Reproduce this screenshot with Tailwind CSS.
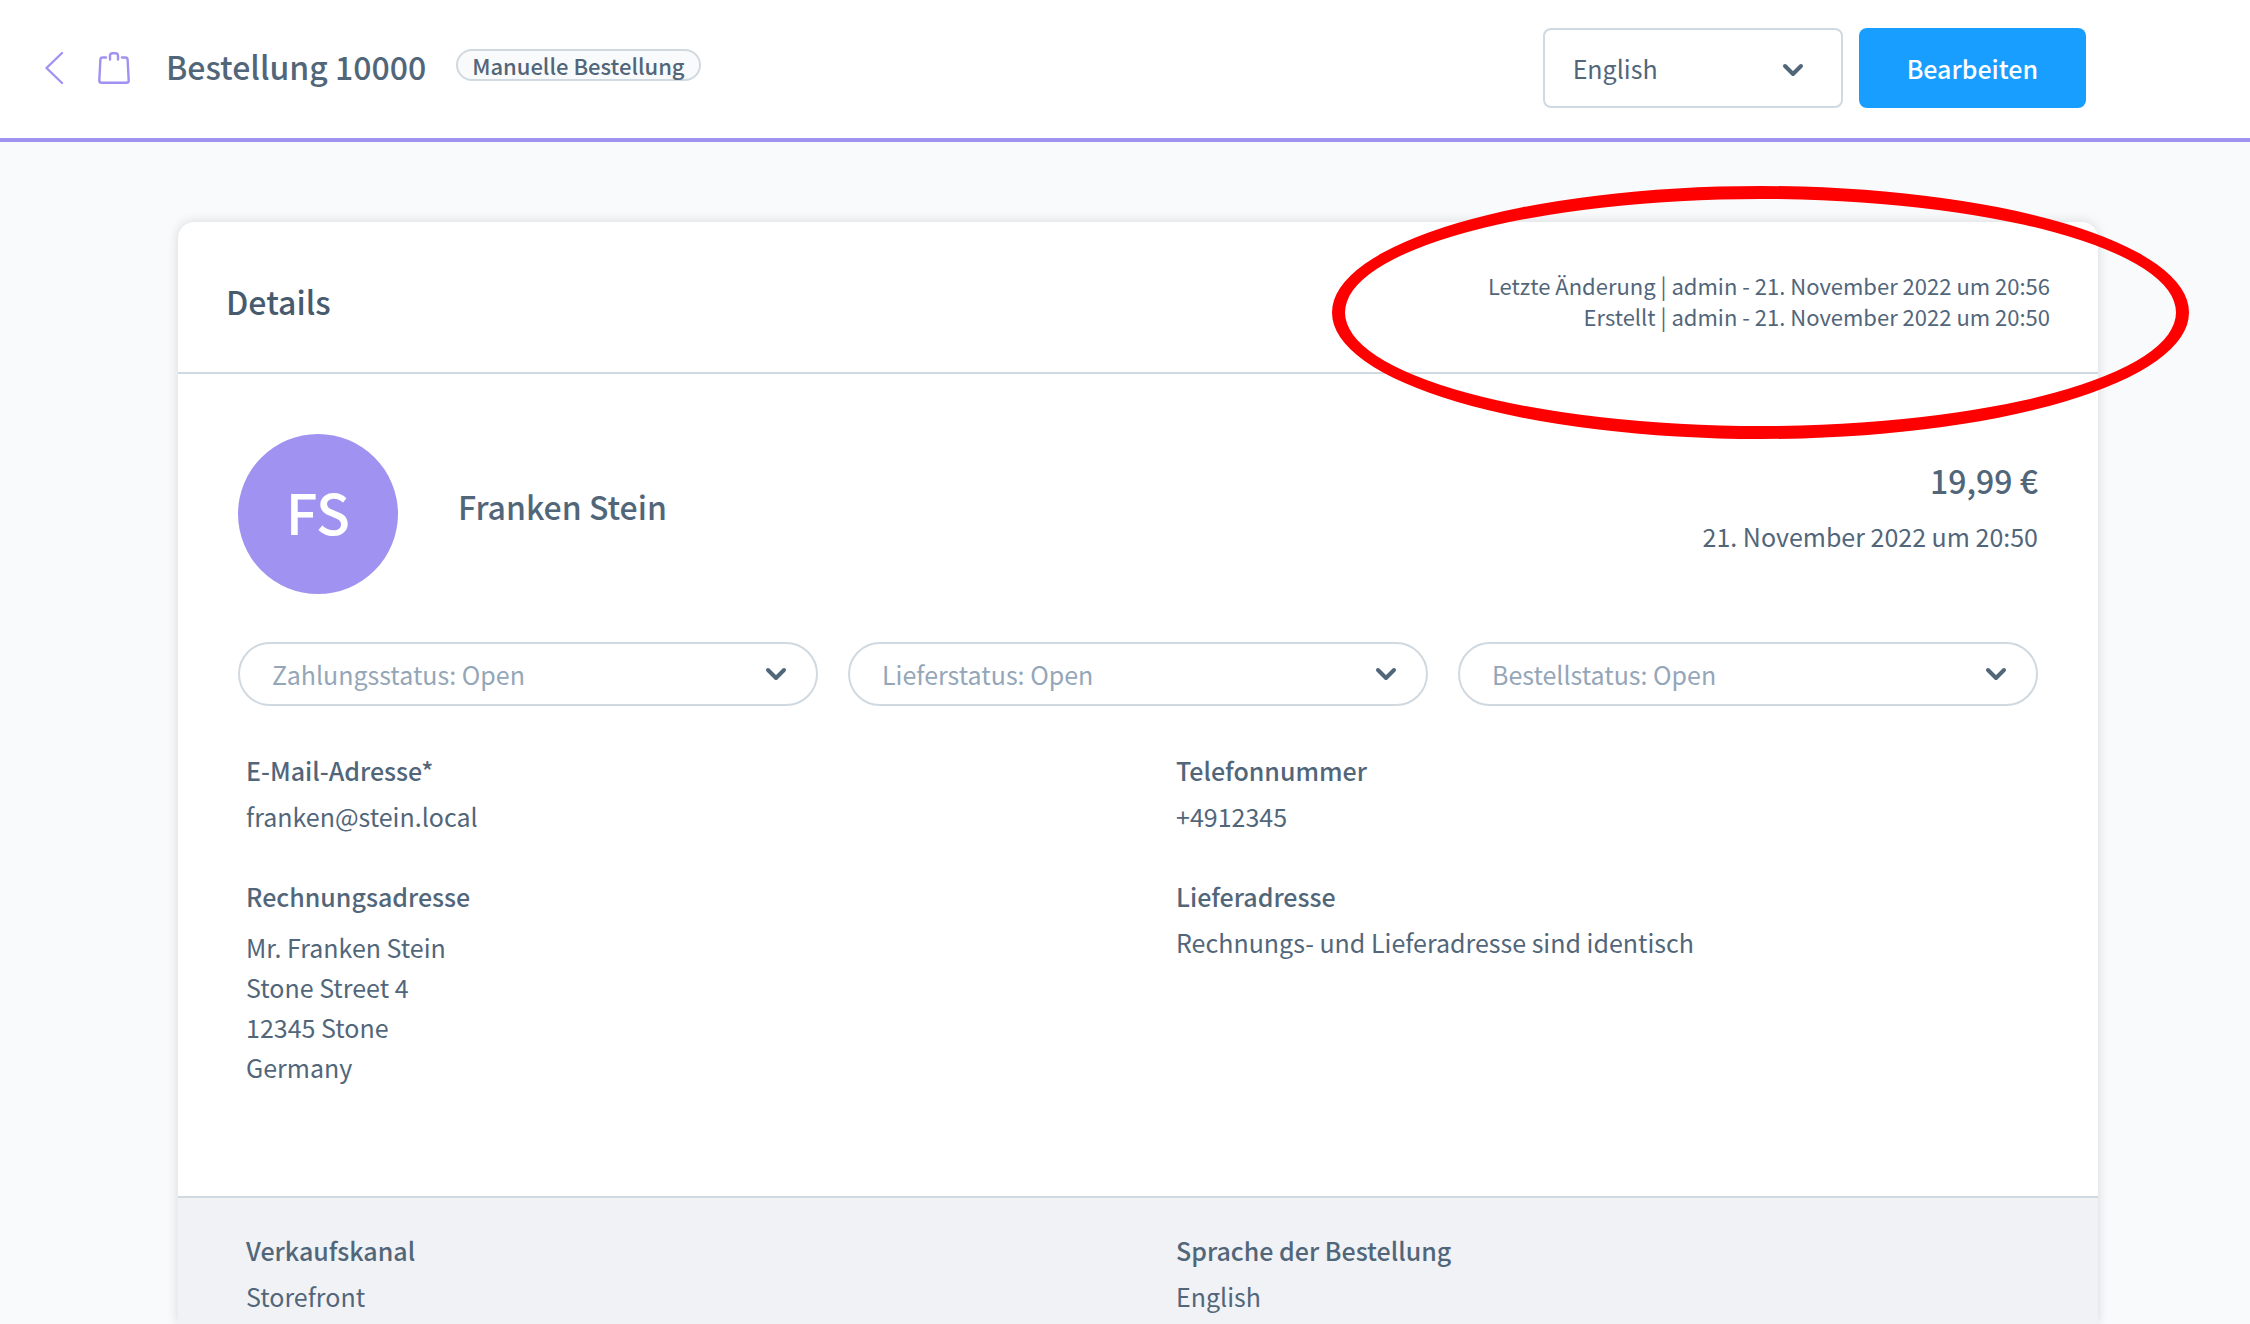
<!DOCTYPE html>
<html lang="de">
<head>
<meta charset="utf-8">
<meta name="viewport" content="width=device-width, initial-scale=1">
<title>Bestellung 10000</title>
<script src="https://cdn.jsdelivr.net/npm/@tailwindcss/browser@4"></script>
</head>
<body class="flex min-h-screen flex-col bg-[#f9fafb] font-['Noto_Sans_CJK_SC','Noto_Sans',sans-serif] text-[25px] leading-10 text-[#52667a]">

<header class="flex items-center justify-between border-b-4 border-[#a092f0] bg-white pt-7 pr-[164px] pb-[30px] pl-11">
  <div class="flex items-center">
    <a href="#" aria-label="Zurück" class="mr-[34px] block">
      <svg class="h-9 w-5" viewBox="0 0 20 36" fill="none" stroke="#a092f0" stroke-width="2.4" stroke-linecap="round" stroke-linejoin="round"><path d="M18 3 2.500 18 18 33"/></svg>
    </a>
    <svg class="mr-9 h-9 w-8" viewBox="0 0 32 36" fill="none" stroke="#a092f0" stroke-width="2.4" stroke-linecap="round" stroke-linejoin="round" aria-hidden="true">
      <path d="M8 7.500H4.600a2.200 2.200 0 0 0-2.200 2L1.300 30.500a2.300 2.300 0 0 0 2.300 2.300h24.800a2.300 2.300 0 0 0 2.300-2.300L29.600 9.500a2.200 2.200 0 0 0-2.200-2H24"/>
      <path d="M12 9.500V5.800A2.600 2.600 0 0 1 14.600 3.200h2.800a2.600 2.600 0 0 1 2.600 2.600v3.700"/>
    </svg>
    <h1 class="mb-1 text-[32px] font-medium">Bestellung 10000</h1>
    <span class="mb-1.5 ml-[30px] rounded-full border-2 border-[#d1d9e0] bg-[#f9fafb] px-3.5 text-[22px] leading-7 font-medium">Manuelle Bestellung</span>
  </div>
  <div class="flex items-center gap-4">
    <div class="relative">
      <select aria-label="Sprache" class="h-20 w-[300px] appearance-none rounded-lg border-2 border-[#d1d9e0] bg-white pl-7">
        <option>English</option>
      </select>
      <svg class="pointer-events-none absolute top-[34px] right-[38px] h-4 w-6" viewBox="0 0 24 16" fill="none" stroke="#52667a" stroke-width="4" stroke-linecap="round" stroke-linejoin="round" aria-hidden="true"><path d="m4 4 8 8 8-8"/></svg>
    </div>
    <button type="button" class="h-20 rounded-lg bg-[#189eff] px-12 font-medium text-white">Bearbeiten</button>
  </div>
</header>

<main class="flex grow flex-col pt-20 pr-[152px] pl-[178px]">
  <article class="flex grow flex-col rounded-t-2xl bg-white shadow-[0_0_12px_rgba(0,0,0,0.14)]">
    <div class="relative flex items-center justify-between border-b-2 border-[#d1d9e0] px-12 pt-12 pb-10">
      <h2 class="text-[32px] font-medium text-[#475a6e]">Details</h2>
      <div class="text-right text-[22px] leading-[31px]">
        <p>Letzte Änderung | admin - 21. November 2022 um 20:56</p>
        <p>Erstellt | admin - 21. November 2022 um 20:50</p>
      </div>
      <div class="pointer-events-none absolute -top-9 -right-[91px] z-10 h-[253px] w-[857px] rounded-[50%] border-[13px] border-[#fe0000]"></div>
    </div>

    <section class="grow pr-[60px] pb-[105px] pl-[60px]">
      <div class="flex items-start pt-[60px]">
        <div class="flex size-40 items-center justify-center rounded-full bg-[#a092f0] pb-1.5 text-[56px] font-medium text-white">FS</div>
        <p class="mt-[52px] ml-[60px] text-[32px] font-medium">Franken Stein</p>
        <div class="mt-[26px] ml-auto text-right">
          <p class="text-[32px] font-medium">19,99 €</p>
          <p class="mt-4">21. November 2022 um 20:50</p>
        </div>
      </div>

      <div class="mt-12 grid grid-cols-3 gap-[30px]">
        <div class="relative">
          <select aria-label="Zahlungsstatus" class="h-16 w-full appearance-none rounded-full border-2 border-[#d1d9e0] bg-white pl-8 text-[#94a6b8]"><option>Zahlungsstatus: Open</option></select>
          <svg class="pointer-events-none absolute top-6 right-[30px] h-4 w-6" viewBox="0 0 24 16" fill="none" stroke="#52667a" stroke-width="4" stroke-linecap="round" stroke-linejoin="round" aria-hidden="true"><path d="m4 4 8 8 8-8"/></svg>
        </div>
        <div class="relative">
          <select aria-label="Lieferstatus" class="h-16 w-full appearance-none rounded-full border-2 border-[#d1d9e0] bg-white pl-8 text-[#94a6b8]"><option>Lieferstatus: Open</option></select>
          <svg class="pointer-events-none absolute top-6 right-[30px] h-4 w-6" viewBox="0 0 24 16" fill="none" stroke="#52667a" stroke-width="4" stroke-linecap="round" stroke-linejoin="round" aria-hidden="true"><path d="m4 4 8 8 8-8"/></svg>
        </div>
        <div class="relative">
          <select aria-label="Bestellstatus" class="h-16 w-full appearance-none rounded-full border-2 border-[#d1d9e0] bg-white pl-8 text-[#94a6b8]"><option>Bestellstatus: Open</option></select>
          <svg class="pointer-events-none absolute top-6 right-[30px] h-4 w-6" viewBox="0 0 24 16" fill="none" stroke="#52667a" stroke-width="4" stroke-linecap="round" stroke-linejoin="round" aria-hidden="true"><path d="m4 4 8 8 8-8"/></svg>
        </div>
      </div>

      <dl class="mt-11 grid grid-cols-2 gap-x-[68px] gap-y-10 pl-2">
        <div>
          <dt class="font-medium">E-Mail-Adresse*</dt>
          <dd class="mt-1.5">franken@stein.local</dd>
        </div>
        <div>
          <dt class="font-medium">Telefonnummer</dt>
          <dd class="mt-1.5">+4912345</dd>
        </div>
        <div>
          <dt class="font-medium">Rechnungsadresse</dt>
          <dd class="mt-[11px]">Mr. Franken Stein<br>Stone Street 4<br>12345 Stone<br>Germany</dd>
        </div>
        <div>
          <dt class="font-medium">Lieferadresse</dt>
          <dd class="mt-1.5">Rechnungs- und Lieferadresse sind identisch</dd>
        </div>
      </dl>
    </section>

    <dl class="grid grid-cols-2 gap-x-[68px] border-t-2 border-[#d1d9e0] bg-[#f0f2f5] pt-8 pr-[60px] pb-2 pl-[68px]">
      <div>
        <dt class="font-medium">Verkaufskanal</dt>
        <dd class="mt-1.5">Storefront</dd>
      </div>
      <div>
        <dt class="font-medium">Sprache der Bestellung</dt>
        <dd class="mt-1.5">English</dd>
      </div>
    </dl>
  </article>
</main>
</body>
</html>
